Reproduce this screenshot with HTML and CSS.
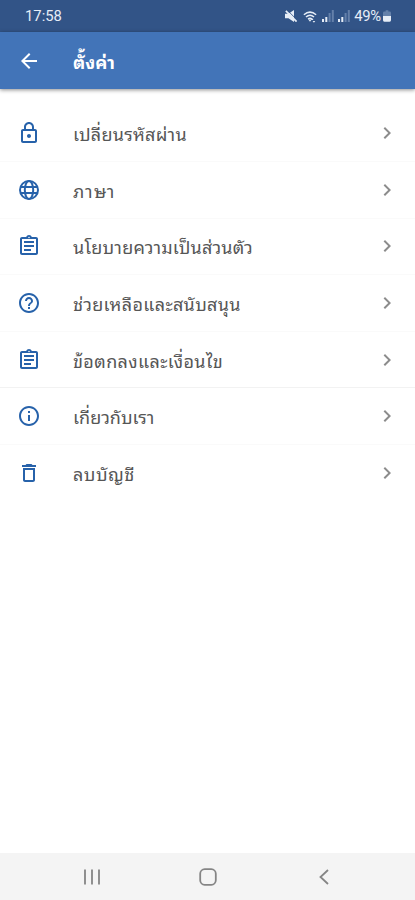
FILE: index.html
```html
<!DOCTYPE html>
<html lang="th">
<head>
<meta charset="utf-8">
<meta name="viewport" content="width=device-width, initial-scale=1">
<title>ตั้งค่า</title>
<link rel="stylesheet" href="styles.css">
</head>
<body>
<svg class="defs" width="0" height="0" aria-hidden="true">
  <symbol id="next" viewBox="0 0 24 24"><path d="M8.6 16.6 13.2 12 8.6 7.4 10 6l6 6-6 6z"/></symbol>
  <symbol id="assignment" viewBox="0 0 24 24"><path d="M7 15h7v2H7zm0-4h10v2H7zm0-4h10v2H7zm12-4h-4.18C14.4 1.84 13.3 1 12 1s-2.4.84-2.82 2H5c-1.1 0-2 .9-2 2v14c0 1.1.9 2 2 2h14c1.1 0 2-.9 2-2V5c0-1.1-.9-2-2-2zm-7-.25a.75.75 0 1 1 0 1.5.75.75 0 0 1 0-1.5zM19 19H5V5h14z"/></symbol>
</svg>
<div class="screen">
  <div class="status">
    <span class="time">17:58</span>
    <div class="indicators">
      <svg class="mute" viewBox="0 0 14 14"><path d="M0 4.500h4L10.500 0v14L4 9.500H0z"/><path class="gap" d="M2.500 0 14 11.500"/><path class="slash" d="M1 1 13.500 13.500"/></svg>
      <svg class="wifi" viewBox="0 0 16 14"><path d="M1 5Q8-1 15 5M3.4 7.6q4.6-4 9.2 0M5.8 10q2.2-2 4.4 0"/><path class="solid" d="M6 10.5h4L8 13zM10.5 9l1.5 2h-3zM12.5 14 11 12h3z"/></svg>
      <svg class="signal" viewBox="0 0 12 12"><path d="M0 9h2v3H0zM3.3 7h2v5h-2z"/><path class="dim" d="M6.6 3h2v9h-2zM9.8 0h2v12h-2z"/></svg>
      <svg class="signal" viewBox="0 0 12 12"><path d="M0 9h2v3H0zM3.3 7h2v5h-2z"/><path class="dim" d="M6.6 3h2v9h-2zM9.8 0h2v12h-2z"/></svg>
      <span class="percent">49%</span>
      <svg class="battery" viewBox="0 0 9 13"><path class="dim" d="M3 0h3v1.5h1.5Q9 1.500 9 3v4H0V3q0-1.500 1.500-1.500H3z"/><path d="M0 6.500h9V11q0 2-1.500 2h-6Q0 13 0 11z"/></svg>
    </div>
  </div>
  <header class="bar">
    <svg class="icon" viewBox="0 0 24 24"><path d="M20 11H7.830l5.590-5.590L12 4l-8 8 8 8 1.410-1.410L7.830 13H20z"/></svg>
    <h1 class="title">ตั้งค่า</h1>
  </header>
  <main class="list">
    <div class="row">
      <svg class="icon" viewBox="0 0 24 24"><path d="M18 8h-1V6c0-2.760-2.240-5-5-5S7 3.240 7 6v2H6c-1.100 0-2 .9-2 2v10c0 1.100.9 2 2 2h12c1.100 0 2-.9 2-2V10c0-1.100-.9-2-2-2zM9 6c0-1.660 1.340-3 3-3s3 1.340 3 3v2H9zm9 14H6V10h12zm-6-3c1.100 0 2-.9 2-2s-.9-2-2-2-2 .9-2 2 .9 2 2 2z"/></svg>
      <span class="label password">เปลี่ยนรหัสผ่าน</span>
      <svg class="next"><use href="#next"/></svg>
    </div>
    <div class="row">
      <svg class="icon line" viewBox="0 0 24 24"><circle cx="12" cy="12" r="9"/><ellipse cx="12" cy="12" rx="4.200" ry="9"/><path d="M3.500 9h17M3.500 15h17"/></svg>
      <span class="label language">ภาษา</span>
      <svg class="next"><use href="#next"/></svg>
    </div>
    <div class="row">
      <svg class="icon"><use href="#assignment"/></svg>
      <span class="label privacy">นโยบายความเป็นส่วนตัว</span>
      <svg class="next"><use href="#next"/></svg>
    </div>
    <div class="row">
      <svg class="icon" viewBox="0 0 24 24"><path d="M11 18h2v-2h-2zm1-16C6.480 2 2 6.480 2 12s4.480 10 10 10 10-4.480 10-10S17.520 2 12 2zm0 18c-4.410 0-8-3.590-8-8s3.590-8 8-8 8 3.590 8 8-3.590 8-8 8zm0-14c-2.210 0-4 1.790-4 4h2c0-1.100.9-2 2-2s2 .9 2 2c0 2-3 1.750-3 5h2c0-2.250 3-2.500 3-5 0-2.210-1.790-4-4-4z"/></svg>
      <span class="label support">ช่วยเหลือและสนับสนุน</span>
      <svg class="next"><use href="#next"/></svg>
    </div>
    <div class="row divided">
      <svg class="icon"><use href="#assignment"/></svg>
      <span class="label terms">ข้อตกลงและเงื่อนไข</span>
      <svg class="next"><use href="#next"/></svg>
    </div>
    <div class="row">
      <svg class="icon" viewBox="0 0 24 24"><path d="M11 7h2v2h-2zm0 4h2v6h-2zm1-9C6.480 2 2 6.480 2 12s4.480 10 10 10 10-4.480 10-10S17.520 2 12 2zm0 18c-4.410 0-8-3.590-8-8s3.590-8 8-8 8 3.590 8 8-3.590 8-8 8z"/></svg>
      <span class="label about">เกี่ยวกับเรา</span>
      <svg class="next"><use href="#next"/></svg>
    </div>
    <div class="row">
      <svg class="icon" viewBox="0 0 24 24"><path d="M6 19c0 1.100.9 2 2 2h8c1.100 0 2-.9 2-2V7H6zM8 9h8v10H8zm7.500-5-1-1h-5l-1 1H5v2h14V4z"/></svg>
      <span class="label delete">ลบบัญชี</span>
      <svg class="next"><use href="#next"/></svg>
    </div>
  </main>
  <nav class="nav">
    <svg viewBox="0 0 18 18"><path d="M2 1.500v15M9 1.500v15M16 1.500v15"/></svg>
    <svg viewBox="0 0 18 18"><rect x="1.200" y="1.200" width="15.600" height="15.600" rx="4.500"/></svg>
    <svg viewBox="0 0 18 18"><path d="M13 2 5.500 9l7.500 7"/></svg>
  </nav>
</div>
</body>
</html>
```
FILE: styles.css
```css
* { box-sizing: border-box; }
body {
  margin: 0;
  background: #fff;
  font-family: Roboto, "Noto Sans Thai Looped", "Noto Looped Thai", Loma, Waree, "Noto Sans Thai", "Noto Sans", sans-serif;
}
.defs { position: absolute; }
.screen { display: flex; flex-direction: column; height: 900px; overflow: hidden; }
.status {
  display: flex;
  align-items: center;
  justify-content: space-between;
  flex: none;
  height: 32px;
  padding: 0 24px 0 25px;
  background: #325487;
  color: #e6edf7;
  font-size: 14.8px;
}
.indicators { display: flex; align-items: center; fill: #e6edf7; }
.mute { width: 12px; height: 12px; margin-right: 6px; }
.slash { stroke: #e6edf7; stroke-width: 2; }
.gap { stroke: #325487; stroke-width: 1; }
.wifi { width: 14px; height: 13px; margin-right: 5px; fill: none; stroke: #e6edf7; stroke-width: 1.7; }
.solid { fill: #e6edf7; stroke: none; }
.signal { width: 12px; height: 12px; margin-right: 4px; }
.dim { fill: #6480aa; }
.percent { margin: 0 2px 0 0; font-size: 14.8px; letter-spacing: -.2px; }
.battery { width: 8px; height: 12px; }
.bar {
  display: flex;
  align-items: center;
  flex: none;
  height: 57px;
  padding-left: 17px;
  background: #4274b8;
  color: #fff;
  box-shadow: 0 1px 4px rgba(0, 0, 0, .45);
}
.icon { flex: none; width: 24px; height: 24px; fill: #2762aa; }
.bar .icon { fill: #fff; }
.line { fill: none; stroke: #2762aa; stroke-width: 2; }
.title { margin: 0 0 0 32px; padding-top: 4px; font-size: 18px; line-height: 26px; font-weight: 700; }
.list { flex: 1; padding-top: 16.5px; }
.row {
  display: flex;
  align-items: center;
  height: 56.6px;
  padding: 0 16px 0 17px;
  border-bottom: 1px solid #fafafa;
}
.row:last-child { border-color: transparent; }
.divided { border-color: #f2f2f2; }
.label { flex: 1; margin-left: 32px; padding-top: 4px; color: #565656; font-size: 18px; line-height: 26px; white-space: nowrap; }
.password { letter-spacing: .25px; }
.language { letter-spacing: 1px; }
.privacy { letter-spacing: .19px; }
.support { letter-spacing: .3px; }
.terms { letter-spacing: .38px; }
.about { letter-spacing: 0; }
.delete { letter-spacing: .5px; }
.next { flex: none; width: 24px; height: 24px; fill: #8c8c8c; }
.nav {
  display: flex;
  align-items: center;
  justify-content: space-around;
  flex: none;
  height: 47px;
  padding: 0 33px 0 34px;
  background: #f4f4f4;
}
.nav svg { width: 18px; height: 18px; fill: none; stroke: #858585; stroke-width: 1.8; }
```
